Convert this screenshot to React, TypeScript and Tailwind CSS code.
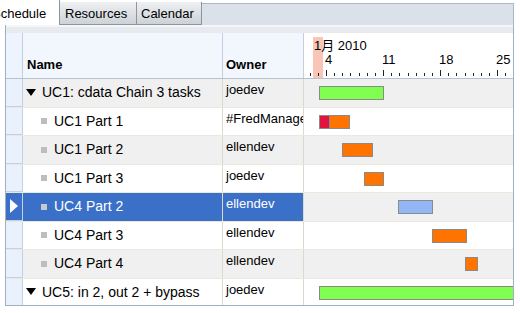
import React from 'react';

type Row = {
    name: string;
    owner: string;
    group?: boolean;
    selected?: boolean;
    bars: { left: number; width: number; color: string }[];
};

// bar positions are pixels from the left of the timeline
const rows: Row[] = [
    { name: 'UC1: cdata Chain 3 tasks', owner: 'joedev', group: true, bars: [{ left: 15, width: 65, color: '#80ff50' }] },
    {
        name: 'UC1 Part 1',
        owner: '#FredManager',
        bars: [
            { left: 15, width: 11, color: '#e0143c' },
            { left: 25, width: 21, color: '#ff7400' },
        ],
    },
    { name: 'UC1 Part 2', owner: 'ellendev', bars: [{ left: 38, width: 31, color: '#ff7400' }] },
    { name: 'UC1 Part 3', owner: 'joedev', bars: [{ left: 60, width: 20, color: '#ff7400' }] },
    { name: 'UC4 Part 2', owner: 'ellendev', selected: true, bars: [{ left: 94, width: 35, color: '#92b6f6' }] },
    { name: 'UC4 Part 3', owner: 'ellendev', bars: [{ left: 128, width: 35, color: '#ff7400' }] },
    { name: 'UC4 Part 4', owner: 'ellendev', bars: [{ left: 161, width: 13, color: '#ff7400' }] },
    { name: 'UC5: in 2, out 2 + bypass', owner: 'joedev', group: true, bars: [{ left: 15, width: 200, color: '#80ff50' }] },
];

const dayX = (d: number) => 22 + (d - 4) * 8.15;

function Ticks() {
    const days = Array.from({ length: 25 }, (_, i) => i + 2);
    return (
        <svg width="210" height="8" className="block">
            {days.map((d) => {
                const x = Math.round(dayX(d)) + 0.5;
                const tall = (d - 4) % 7 === 0;
                return <line key={d} x1={x} x2={x} y1={tall ? 1 : 4} y2={7} stroke="#222" strokeWidth="1" />;
            })}
        </svg>
    );
}

function TimelineHeader() {
    return (
        <div className="relative h-full bg-white overflow-hidden">
            <div className="absolute left-[9px] top-[4px] w-[10px] h-[41px] bg-[#f8c6b6]" />
            <div className="relative pl-[10px] pt-[5px] text-[13px] leading-[15px] text-black">1月 2010</div>
            <div className="relative h-[14px] text-[13px] leading-[14px] text-black">
                {[4, 11, 18, 25].map((d) => (
                    <span key={d} className="absolute top-0" style={{ left: Math.round(dayX(d)) - 1 }}>
                        {d}
                    </span>
                ))}
            </div>
            <div className="absolute left-0 bottom-[1px]">
                <Ticks />
            </div>
        </div>
    );
}

function GridRow({ row, index }: { row: Row; index: number }) {
    const shade = index % 2 === 0 ? 'bg-[#f0f0f0]' : 'bg-white';
    return (
        <div className="flex h-[28.5px] border-b border-[#ebe9de]">
            <div
                className={`w-[17px] shrink-0 border-r border-b border-[#c3d0e3] flex items-center justify-center ${
                    row.selected ? 'bg-[#3b70c9]' : 'bg-[#e9f1fc]'
                }`}
            >
                {row.selected && (
                    <svg width="8" height="14" viewBox="0 0 8 14">
                        <path d="M0 0 L8 7 L0 14 Z" fill="#ffffff" />
                    </svg>
                )}
            </div>
            <div
                className={`w-[200px] shrink-0 flex items-center text-[14px] border-r border-[#dcd9cc] ${
                    row.selected ? 'bg-[#3b70c9] text-white' : `${shade} text-black`
                }`}
            >
                {row.group ? (
                    <>
                        <svg width="10" height="8" viewBox="0 0 10 8" className="ml-[3px] mr-[6px]">
                            <path d="M0 0 L10 0 L5 7 Z" fill="#000" />
                        </svg>
                        <span className="whitespace-nowrap">{row.name}</span>
                    </>
                ) : (
                    <>
                        <span
                            className={`ml-[18px] mr-[7px] w-[6px] h-[6px] ${
                                row.selected ? 'bg-[#c9c9c9]' : 'bg-[#bdbdbd]'
                            }`}
                        />
                        <span className="whitespace-nowrap">{row.name}</span>
                    </>
                )}
            </div>
            <div
                className={`w-[81px] shrink-0 overflow-hidden pl-[3px] pt-[3px] text-[13px] leading-[15px] whitespace-nowrap border-r border-[#dcd9cc] ${
                    row.selected ? 'bg-[#3b70c9] text-white' : `${shade} text-black`
                }`}
            >
                {row.owner}
            </div>
            <div className={`relative flex-1 overflow-hidden ${row.selected ? 'bg-[#f0f0f0]' : shade}`}>
                {row.bars.map((b, i) => (
                    <div
                        key={i}
                        className="absolute top-[7px] h-[14px] border-[1.5px] border-[#8a8a8a]"
                        style={{ left: b.left, width: b.width, background: b.color }}
                    />
                ))}
            </div>
        </div>
    );
}

export default function App() {
    return (
        <div className="w-[520px] h-[313px] bg-white overflow-hidden text-black font-['Liberation_Sans','Noto_Sans_CJK_JP',sans-serif]">
            {/* Tabs */}
            <div className="flex h-[25px] text-[13px]">
                <div className="w-[60px] shrink-0 bg-white border-r border-[#8d949c] overflow-hidden pt-[4px] whitespace-nowrap">
                    <div className="ml-[-8px]">Schedule</div>
                </div>
                <div className="w-[77px] shrink-0 mt-[2px] bg-gradient-to-b from-[#eef0f2] to-[#cdd2d7] border-r border-b border-[#8d949c] pl-[5px] pt-[2px]">
                    Resources
                </div>
                <div className="w-[65px] shrink-0 mt-[2px] bg-gradient-to-b from-[#eef0f2] to-[#cdd2d7] border-r border-b border-[#8d949c] pl-[4px] pt-[2px]">
                    Calendar
                </div>
                <div className="flex-1 mt-[3px] mr-[6px] bg-[#dae1e9] border-t border-r border-[#aab8c9]" />
            </div>

            {/* Frame */}
            <div className="ml-[5px] mr-[6px] h-[281px] border-l border-r border-b border-[#9fb0c5] flex flex-col">
                <div className="h-[8px] bg-[#e7ebf0] border-t-2 border-[#f4f6f9]" />
                <div className="flex h-[46px] border-b border-[#b7c2d0]">
                    <div className="w-[17px] shrink-0 bg-[#eef4fd] border-r border-[#c3cfdf]" />
                    <div className="w-[200px] shrink-0 bg-[#f2f7fe] border-r border-[#c3cfdf] flex items-end pl-[4px] pb-[4px] text-[13px] font-bold">
                        Name
                    </div>
                    <div className="w-[81px] shrink-0 bg-[#f2f7fe] border-r border-[#c3cfdf] flex items-end pl-[3px] pb-[4px] text-[13px] font-bold">
                        Owner
                    </div>
                    <div className="flex-1">
                        <TimelineHeader />
                    </div>
                </div>
                <div className="flex-1 overflow-hidden">
                    {rows.map((r, i) => (
                        <GridRow key={i} row={r} index={i} />
                    ))}
                </div>
            </div>
        </div>
    );
}
